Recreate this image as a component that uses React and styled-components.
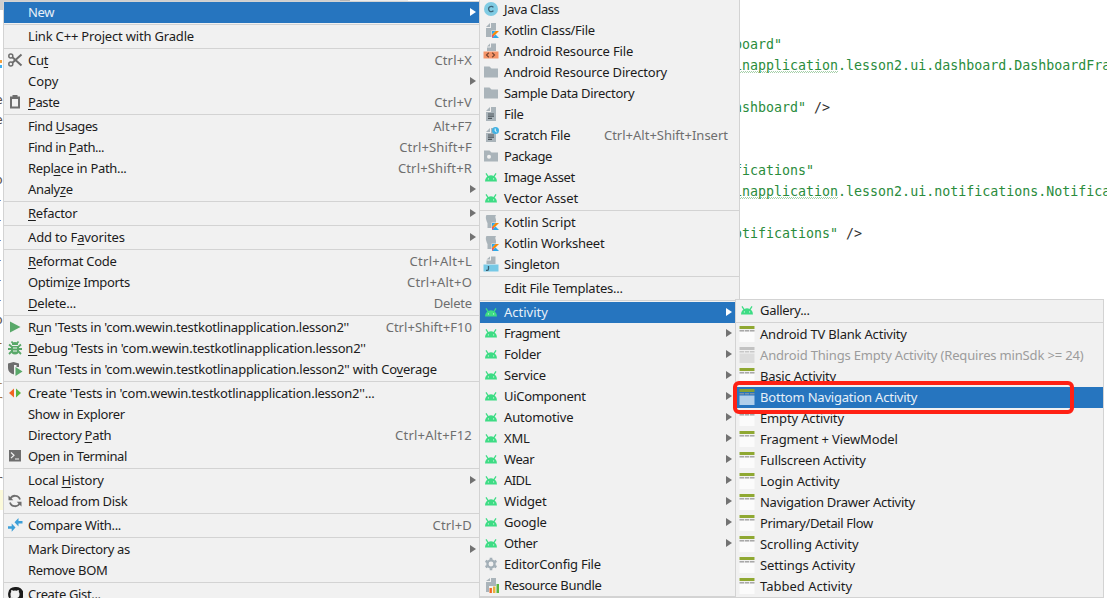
import React from "react";
import styled, { createGlobalStyle } from "styled-components";

const GlobalStyle = createGlobalStyle`
  * {
    box-sizing: border-box;
  }

  html, body {
    margin: 0;
    overflow: hidden;
    background: #ffffff;
  }
`;

const Screen = styled.div`
  position: relative;
  display: grid;
  grid-template-columns: 734px 373px;
  grid-template-rows: 2px 596px;
  width: 1107px;
  height: 598px;
  overflow: hidden;
  background: #ffffff;
  font-family: "Noto Sans", "Open Sans", sans-serif;
  font-size: 13px;
  color: #1c1c1c;
`;

const TopStrip = styled.div`
  grid-column: 1 / 3;
  width: 408px;
  background: linear-gradient(90deg, #cfcfcf 340px, #b4b4b4 340px, #b4b4b4 350px, #ececec 350px);
`;

const Gutter = styled.div`
  width: 3px;
  overflow: hidden;
  font-family: "DejaVu Sans Mono", monospace;
  font-size: 13px;
`;

const GutterTab = styled.div`
  height: 8px;
  margin-bottom: 50px;
  background: #cfcfcf;
`;

const GutterBadge = styled.div`
  width: 2px;
  height: 8px;
  margin-bottom: 22px;
  background: linear-gradient(#f5a03c 3px, transparent 3px, transparent 5px, #3fb1f3 5px);
`;

const GutterLine = styled.div`
  height: 20px;
  line-height: 20px;
  text-indent: -5px;
  white-space: pre;
  color: ${p => p.$color || "#5a5048"};
  background: ${p => p.$bg || "transparent"};
`;

const Code = styled.pre`
  margin: 0;
  padding-top: 32px;
  overflow: hidden;
  font-family: "DejaVu Sans Mono", monospace;
  font-size: 13.3px;
  line-height: 21.05px;
  color: #2a8c3c;

  b {
    font-weight: normal;
    color: #303030;
  }

  u {
    text-decoration: none;
    background: conic-gradient(#a5d0a8 25%, transparent 0 50%, #a5d0a8 0 75%, transparent 0) left bottom / 2px 2px repeat-x;
  }
`;

const Menu = styled.div`
  position: absolute;
  left: ${p => p.$x}px;
  top: ${p => p.$y}px;
  width: ${p => p.$w}px;
  display: flex;
  flex-direction: column;
  background: #f1f1f1;
  border: 1px solid #d3d3d3;
  border-bottom-width: 2px;
`;

const Row = styled.div`
  display: flex;
  align-items: flex-start;
  flex: none;
  height: 21px;
  padding-left: 3px;
  padding-right: ${p => (p.$arrow ? 3 : 7) + p.$inset}px;
  white-space: pre;
  background: ${p => (p.$selected ? "#2675bf" : "transparent")};
  color: ${p => (p.$selected ? "#e8f0f8" : p.$disabled ? "#9c9c9c" : "inherit")};
`;

const IconBox = styled.span`
  display: flex;
  width: 16px;
  height: 16px;
  margin: 2px 5px 0 0;

  svg {
    width: 16px;
    height: 16px;
  }
`;

const Label = styled.span`
  flex: 1;
  line-height: 20px;
  letter-spacing: ${p => p.$spacing || 0}px;

  u {
    text-decoration-thickness: 1px;
    text-underline-offset: 2px;
    text-decoration-skip-ink: none;
  }
`;

const Shortcut = styled.span`
  color: #6e6e6e;
  line-height: 20px;
  letter-spacing: ${p => p.$spacing || 0}px;
`;

const Arrow = styled.span`
  margin-top: 6px;
  border-left: 6px solid ${p => (p.$selected ? "#ffffff" : "#727272")};
  border-top: 4px solid transparent;
  border-bottom: 4px solid transparent;
`;

const Separator = styled.div`
  flex: none;
  height: 3px;
  padding: 1px 0;
  background: #d3d3d3;
  background-clip: content-box;
`;

const Highlight = styled.div`
  position: absolute;
  left: 733px;
  top: 381px;
  width: 341px;
  height: 33px;
  border: 4px solid #ff2114;
  border-radius: 6px;
`;

const GRAY = "#6e6e6e";
const FILE = "#aab4ba";

const KotlinBadge = () => (
  <g>
    <path d="M8.5 8.5h7.5v7.5H8.5z" fill="#f1f1f1" />
    <path d="M12.5 9h3.5l-7 7v-3.500z" fill="#f88909" />
    <path d="M9 9h3.500L9 12.500z" fill="#2ea8e8" />
    <path d="M9 16l3.500-3.500L16 16z" fill="#2ea8e8" />
    <path d="M9 12.500v3.500l2-2z" fill="#e44a7a" />
  </g>
);

const page = (
  <g fill={FILE}>
    <path d="M8 1v5H3v9h10V1z" />
    <path d="M7 1v4H3z" />
  </g>
);

const icons = {
  cut: (
    <g fill="none" stroke={GRAY} strokeWidth="1.5">
      <circle cx="3.8" cy="4" r="2" />
      <circle cx="3.8" cy="12" r="2" />
      <path d="M5.4 5.2L14.5 13.5M5.4 10.8L14.5 2.5" strokeWidth="2" />
    </g>
  ),
  paste: (
    <g>
      <path d="M3 2.5h2.5V1h5v1.500H13v12H3z" fill={GRAY} />
      <path d="M5 5h6v7.500H5z" fill="#f1f1f1" />
    </g>
  ),
  run: <path d="M3 2.500L13.500 8 3 13.500z" fill="#59a869" />,
  debug: (
    <g fill="none" stroke="#59a869" strokeWidth="1.8">
      <path d="M4 6h8v4.500a4 4 0 0 1-8 0z" fill="#59a869" stroke="none" />
      <path d="M5 5a3 3 0 0 1 6 0z" fill="#59a869" stroke="none" />
      <path d="M4.500 1.500L6.500 4M11.500 1.500L9.500 4M1 9h14M2 4.500L5 7M14 4.500L11 7M2 14l3-3M14 14l-3-3" />
      <path d="M6 8h4M6 11h4" stroke="#f1f1f1" strokeWidth="1.2" />
    </g>
  ),
  coverage: (
    <g>
      <path d="M1 2.500l5.500-1.500L12 2.500V6H9.500V4H7v9.500C3 12.500 1 10 1 7z" fill={GRAY} />
      <path d="M8.500 6L15.500 10.500 8.500 15z" fill="#59a869" />
    </g>
  ),
  create: (
    <g>
      <path d="M7 3.500v9L2 8z" fill="#f26522" />
      <path d="M9 3.500v9L14 8z" fill="#59b540" />
    </g>
  ),
  terminal: (
    <g>
      <path d="M2 2h12v11.500H2z" fill={GRAY} />
      <path d="M4 4.500l3 2.800-3 2.800M8 11h4" fill="none" stroke="#f1f1f1" strokeWidth="1.2" />
    </g>
  ),
  reload: (
    <g fill="none" stroke={GRAY} strokeWidth="1.8">
      <path d="M3.200 6A5.200 5.200 0 0 1 13 6.500M12.800 10A5.200 5.200 0 0 1 3 9.500" />
      <path d="M1.500 2.500v4.800h4.800zM14.500 13.500V8.700H9.700z" fill={GRAY} stroke="none" />
    </g>
  ),
  compare: (
    <g fill="#3d9fd8">
      <path d="M7.500 5.200L11.500 1v3H15.500v2.400H11.500v3z" />
      <path d="M8.500 10.500L4.700 6.500v2.800H1v2.400h3.700v3z" />
    </g>
  ),
  github: (
    <path
      d="M8 1a7 7 0 0 0-2.200 13.600c.4.100.5-.2.500-.4v-1.300c-2 .4-2.400-.9-2.400-.9-.9-1.300-.5-1.200-.5-1.200.9.100 1.300.900 1.300.900.700 1 1.600.6 2 .4C4 12 3.500 11 3.500 8c0-1 .3-1.500.7-2-.1-.5-.1-1.200.1-2 .8 0 1.500.4 2 .8a7 7 0 0 1 3.400 0c.5-.4 1.200-.8 2-.8.2.8.2 1.500.1 2 .4.500.7 1 .7 2 0 3-1 4-3.100 4.100.300.300.500.700.500 1.300v1.800c0 .2.100.500.500.400A7 7 0 0 0 8 1z"
      fill="#1b1b1b"
    />
  ),
  javaClass: (
    <g>
      <circle cx="8" cy="8" r="7" fill="#7fcbe3" />
      <path d="M10.400 6.300A2.700 2.700 0 1 0 10.400 9.700" fill="none" stroke="#3c6478" strokeWidth="1.3" />
    </g>
  ),
  kotlinFile: (
    <g>
      {page}
      <KotlinBadge />
    </g>
  ),
  kotlinScript: (
    <g>
      <path d="M3.500 1h9.500c-1.500 2 0 3.500 0 5v8H4.500V9C3.500 7 2 3 3.500 1z" fill={FILE} />
      <KotlinBadge />
    </g>
  ),
  resourceFile: (
    <g>
      <path d="M8 .5v4H4V8h9V.5zM7 .5v3H4z" fill={FILE} />
      <path d="M.5 8.500h15v7H.5z" fill="#f59468" />
      <path d="M5.800 9.800L3.500 12l2.300 2.200M9.200 9.800L11.500 12 9.200 14.200" fill="none" stroke="#7a4630" strokeWidth="1.2" />
    </g>
  ),
  folder: <path d="M1 2.500h5.500L8.500 4.500H15v9H1z" fill={FILE} />,
  file: (
    <g>
      {page}
      <path d="M5 8h6M5 10.200h6M5 12.400h4" stroke="#4d565c" strokeWidth="1.2" />
    </g>
  ),
  scratch: (
    <g>
      {page}
      <path d="M5 8h6M5 10.200h6M5 12.400h4" stroke="#4d565c" strokeWidth="1.2" />
      <circle cx="12.5" cy="3.5" r="3.5" fill="#3fb1e3" />
      <path d="M12.200 1.500v2.500l1.500 1" fill="none" stroke="#ffffff" />
    </g>
  ),
  package: (
    <g>
      <path d="M1 2.500h5.500L8.500 4.500H15v9H1z" fill={FILE} />
      <circle cx="6" cy="8.8" r="2" fill="#f1f1f1" />
    </g>
  ),
  android: (
    <g>
      <path d="M2 12.500a6 6.300 0 0 1 12 0z" fill="#3ddc84" />
      <path d="M3 4.300L5.300 8M13 4.300L10.700 8" stroke="#3ddc84" strokeWidth="1.3" />
      <circle cx="5.4" cy="9.9" r=".6" fill="#d5f5e2" />
      <circle cx="10.6" cy="9.9" r=".6" fill="#d5f5e2" />
    </g>
  ),
  singleton: (
    <g>
      <path d="M8 .5v4H3.500V8h9V.5zM7 .5v3H3.500z" fill={FILE} />
      <path d="M.5 8.500h15v7H.5z" fill="#76c9e6" />
      <path d="M5.500 10v3q0 1.300-1.300 1.300H3" fill="none" stroke="#36596b" strokeWidth="1.3" />
    </g>
  ),
  gear: (
    <g fill="none" stroke="#a3afb7">
      <circle cx="8" cy="8" r="3.6" strokeWidth="2.3" />
      <path d="M8 1.800v2M8 12.200v2M2.600 4.900l1.800 1M11.600 10.100l1.800 1M2.600 11.100l1.800-1M11.600 5.900l1.800-1" strokeWidth="2.6" />
    </g>
  ),
  bundle: (
    <g>
      <path d="M8 1v4H3v10h3V9h7V1zM7 1v3H3z" fill={FILE} />
      <path d="M6.500 11h2.400v5H6.500z" fill="#f26522" />
      <path d="M10 9.500h2.400V16H10z" fill="#e8b03c" />
      <path d="M13.500 7H16v9h-2.500z" fill="#59b540" />
    </g>
  ),
  template: (
    <g>
      <path d="M.5 0h15v16H.5z" fill="#fbfbfb" />
      <path d="M.5 0h15v3H.5z" fill="#8fa832" />
      <path d="M.5 3h15v3H.5z" fill="#f1f1f1" />
      <path d="M.5 4.800h4.500M5.800 4.800h4.400M11 4.800h4.500" stroke="#a8a8a8" strokeWidth="1.6" />
    </g>
  ),
  templateSelected: (
    <g>
      <path d="M.5 0h15v3H.5z" fill="#84a034" />
      <path d="M.5 4.800h4.500M5.800 4.800h4.400M11 4.800h4.500" stroke="#7d93a8" strokeWidth="1.6" />
      <path d="M.5 6.500h15V16H.5z" fill="#b1cfea" />
    </g>
  ),
  templateDisabled: (
    <g>
      <path d="M.5 0h15v3H.5z" fill="#c2c2c2" />
      <path d="M.5 4.800h4.500M5.800 4.800h4.400M11 4.800h4.500" stroke="#c8c8c8" strokeWidth="1.6" />
      <path d="M.5 6.500h15V16H.5z" fill="#dcdcdc" />
    </g>
  ),
};

const TEST = "'Tests in 'com.wewin.testkotlinapplication.lesson2''";

// "_" marks the mnemonic letter, "-" is a separator, ls is the label's letter spacing
const contextItems = [
  { label: "New", ls: -0.3, arrow: true, selected: true },
  "-",
  { label: "Link C++ Project with Gradle", ls: -0.18 },
  "-",
  { label: "Cu_t", ls: -0.3, icon: "cut", keys: "Ctrl+X" },
  { label: "Copy", arrow: true },
  { label: "_Paste", ls: -0.4, icon: "paste", keys: "Ctrl+V" },
  "-",
  { label: "Find _Usages", ls: -0.4, keys: "Alt+F7" },
  { label: "Find in _Path...", ls: -0.43, keys: "Ctrl+Shift+F" },
  { label: "Repl_ace in Path...", ls: -0.31, keys: "Ctrl+Shift+R" },
  { label: "Analy_ze", ls: -0.35, arrow: true },
  "-",
  { label: "_Refactor", ls: -0.25, arrow: true },
  "-",
  { label: "Add to F_avorites", ls: -0.15, arrow: true },
  "-",
  { label: "_Reformat Code", ls: -0.27, keys: "Ctrl+Alt+L", keyLs: 0.28 },
  { label: "Optimi_ze Imports", ls: -0.34, keys: "Ctrl+Alt+O", keyLs: 0.2 },
  { label: "_Delete...", ls: -0.22, keys: "Delete", keyLs: -0.2 },
  "-",
  { label: `R_un ${TEST}`, ls: -0.24, icon: "run", keys: "Ctrl+Shift+F10", keyLs: 0.04 },
  { label: `_Debug ${TEST}`, ls: -0.23, icon: "debug" },
  { label: `Run ${TEST} with Co_verage`, ls: -0.23, icon: "coverage" },
  "-",
  { label: `Create ${TEST}...`, ls: -0.23, icon: "create" },
  { label: "Show in Explorer", ls: -0.34 },
  { label: "Directory _Path", ls: -0.29, keys: "Ctrl+Alt+F12", keyLs: 0.2 },
  { label: "Open in Terminal", ls: -0.37, icon: "terminal" },
  "-",
  { label: "Local _History", ls: -0.23, arrow: true },
  { label: "Reload from Disk", ls: -0.31, icon: "reload" },
  "-",
  { label: "Compare With...", ls: -0.33, icon: "compare", keys: "Ctrl+D" },
  "-",
  { label: "Mark Directory as", ls: -0.35, arrow: true },
  { label: "Remove BOM", ls: -0.35 },
  "-",
  { label: "Create Gist...", ls: -0.35, icon: "github" },
];

const androidGroup = (label, ls) => ({ label, ls, icon: "android", arrow: true });

const newItems = [
  { label: "Java Class", ls: -0.4, icon: "javaClass" },
  { label: "Kotlin Class/File", ls: -0.29, icon: "kotlinFile" },
  { label: "Android Resource File", ls: -0.16, icon: "resourceFile" },
  { label: "Android Resource Directory", ls: -0.18, icon: "folder" },
  { label: "Sample Data Directory", ls: -0.31, icon: "folder" },
  { label: "File", ls: -0.35, icon: "file" },
  { label: "Scratch File", ls: -0.22, icon: "scratch", keys: "Ctrl+Alt+Shift+Insert", keyLs: 0 },
  { label: "Package", ls: -0.45, icon: "package" },
  { label: "Image Asset", ls: -0.42, icon: "android" },
  { label: "Vector Asset", ls: -0.1, icon: "android" },
  "-",
  { label: "Kotlin Script", ls: -0.15, icon: "kotlinScript" },
  { label: "Kotlin Worksheet", ls: -0.25, icon: "kotlinScript" },
  { label: "Singleton", ls: -0.25, icon: "singleton" },
  "-",
  { label: "Edit File Templates...", ls: -0.24 },
  "-",
  { ...androidGroup("Activity", 0), selected: true },
  androidGroup("Fragment", -0.45),
  androidGroup("Folder", -0.25),
  androidGroup("Service", -0.2),
  androidGroup("UiComponent", -0.3),
  androidGroup("Automotive", -0.15),
  androidGroup("XML", -0.2),
  androidGroup("Wear", -0.4),
  androidGroup("AIDL", -0.6),
  androidGroup("Widget", -0.15),
  androidGroup("Google", -0.2),
  androidGroup("Other", -0.45),
  { label: "EditorConfig File", ls: -0.22, icon: "gear" },
  { label: "Resource Bundle", ls: -0.36, icon: "bundle" },
];

const template = (label, ls) => ({ label, ls, icon: "template" });

const activityItems = [
  { label: "Gallery...", ls: -0.3, icon: "android" },
  "-",
  template("Android TV Blank Activity", -0.2),
  { label: "Android Things Empty Activity (Requires minSdk >= 24)", ls: -0.17, icon: "templateDisabled", disabled: true },
  template("Basic Activity", -0.2),
  { label: "Bottom Navigation Activity", ls: -0.21, icon: "templateSelected", selected: true },
  template("Empty Activity", -0.15),
  template("Fragment + ViewModel", -0.13),
  template("Fullscreen Activity", -0.17),
  template("Login Activity", -0.13),
  template("Navigation Drawer Activity", -0.27),
  template("Primary/Detail Flow", -0.36),
  template("Scrolling Activity", -0.07),
  template("Settings Activity", -0.1),
  template("Tabbed Activity", 0),
];

const BROWN = "#9c6a2e";

const gutterLines = [
  ["e"], ["e"], [" "], [" "], ["o"], ["-"], ["-"], ["-"], ["-"], ["-"],
  ["-"], ["o"], ["l", BROWN], [" "], ["i", BROWN], ["r", BROWN], [" "], [" "], [" "], ["r"],
  [" ", "", "#fcfadb"],
];

function MenuLabel({ text, spacing }) {
  const at = text.indexOf("_");
  if (at < 0) return <Label $spacing={spacing}>{text}</Label>;
  return (
    <Label $spacing={spacing}>
      {text.slice(0, at)}
      <u>{text[at + 1]}</u>
      {text.slice(at + 2)}
    </Label>
  );
}

function PopupMenu({ x, y, width, items, inset = 0 }) {
  return (
    <Menu $x={x} $y={y} $w={width}>
      {items.map((item, i) =>
        item === "-" ? (
          <Separator key={i} />
        ) : (
          <Row key={i} $selected={item.selected} $disabled={item.disabled} $arrow={item.arrow} $inset={inset}>
            <IconBox>{item.icon && <svg viewBox="0 0 16 16">{icons[item.icon]}</svg>}</IconBox>
            <MenuLabel text={item.label} spacing={item.ls} />
            {item.keys && <Shortcut $spacing={item.keyLs ?? 0.15}>{item.keys}</Shortcut>}
            {item.arrow && <Arrow $selected={item.selected} />}
          </Row>
        )
      )}
    </Menu>
  );
}

export default function App() {
  return (
    <Screen>
      <GlobalStyle />
      <TopStrip />
      <Gutter>
        <GutterTab />
        <GutterBadge />
        {gutterLines.map(([text, color, bg], i) => (
          <GutterLine key={i} $color={color} $bg={bg}>{text}</GutterLine>
        ))}
      </Gutter>
      <Code>
        {'board"\n'}
        <u>inapplication</u>
        {".lesson2.ui.dashboard.DashboardFra\n\n"}
        {'ashboard" '}
        <b>{"/>"}</b>
        {'\n\n\nfications"\n'}
        <u>inapplication</u>
        {".lesson2.ui.notifications.Notifica\n\n"}
        {'otifications" '}
        <b>{"/>"}</b>
      </Code>
      <PopupMenu x={3} y={1} width={477} items={contextItems} />
      <PopupMenu x={479} y={-2} width={261} items={newItems} inset={4} />
      <PopupMenu x={735} y={299} width={369} items={activityItems} />
      <Highlight />
    </Screen>
  );
}
